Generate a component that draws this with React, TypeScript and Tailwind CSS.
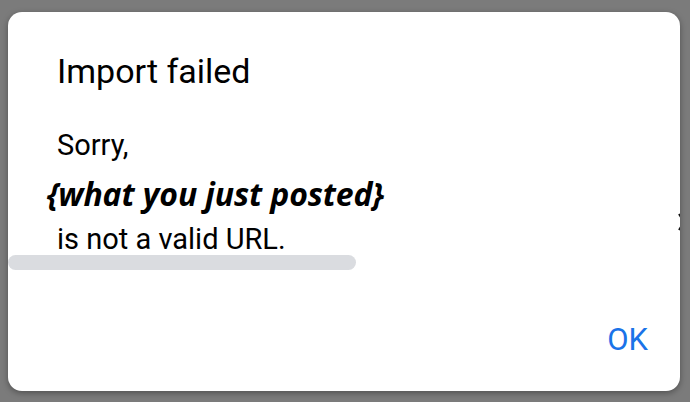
export default function App() {
  return (
    <div className="w-[690px] h-[402px] bg-[#7b7b7b] pt-[12px] pl-[8px] overflow-hidden">
      <div className="relative w-[672px] h-[379px] bg-white rounded-[14px] overflow-hidden flex flex-col shadow-[0_2px_6px_rgba(0,0,0,0.35)] font-['Roboto',sans-serif]">
        <h2 className="pl-[49px] pt-[39px] text-[34px] leading-[40px] font-normal text-black">
          Import failed
        </h2>
        <div className="mt-[30px] text-[29px] text-black">
          <div className="pl-[49px] leading-[48px]">Sorry,</div>
          <div className="pl-[39px] pt-[3px] leading-[44px] font-['Open_Sans',sans-serif] font-bold italic text-[32px] tracking-[-0.1px]">
            {"{what you just posted}"}
          </div>
          <div className="pl-[49px] pt-[9px] leading-[28px]">is not a valid URL.</div>
        </div>
        <div className="mt-[2px] w-[348px] h-[15px] rounded-full bg-[#dadce0]" />
        <div className="mt-auto flex justify-end pr-[32px] pb-[31px]">
          <button className="text-[31px] leading-[40px] font-normal text-[#1a73e8]">OK</button>
        </div>
        <svg className="absolute right-[-6px] top-[201px]" width="8" height="18" viewBox="0 0 8 18">
          <path d="M1 1 L6 9 L1 17" fill="none" stroke="#111" strokeWidth="2" />
        </svg>
      </div>
    </div>
  );
}
